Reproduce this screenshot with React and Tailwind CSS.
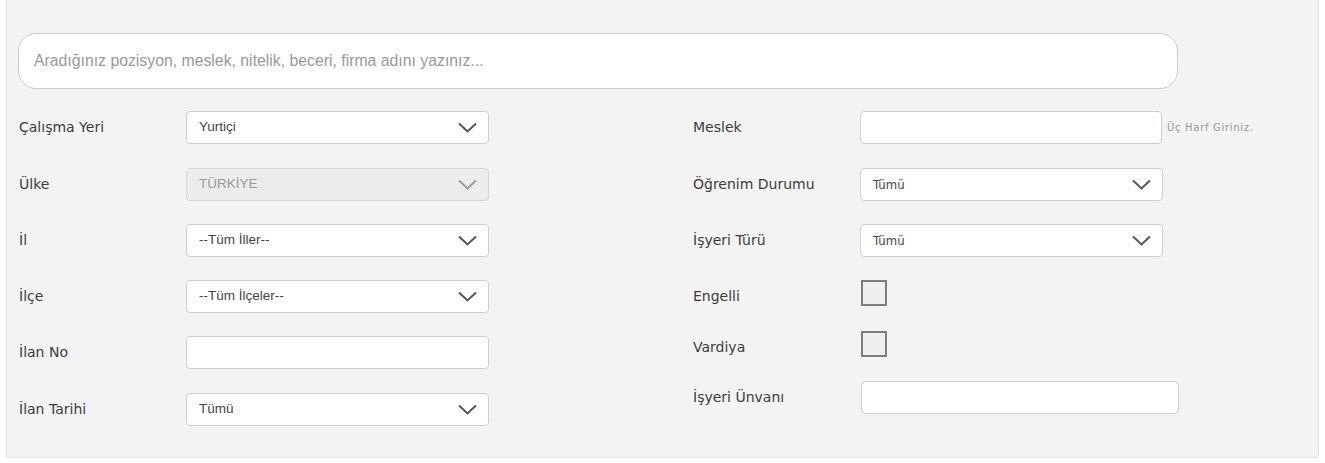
import { useState } from 'react'

const labelFont = { fontFamily: '"DejaVu Sans", Verdana, sans-serif' }

function Chevron({ muted }) {
  return (
    <svg className="w-[19px] h-[11px] shrink-0" viewBox="0 0 19 11" fill="none">
      <path d="M1 1.5l8.5 8 8.5-8" stroke={muted ? '#9a9a9a' : '#555'} strokeWidth="2" />
    </svg>
  )
}

function Select({ value, disabled, narrow }) {
  return (
    <div
      className={`flex items-center justify-between h-[33px] w-[303px] rounded-[4px] border pl-3 pr-[11px] ${
        disabled ? 'bg-[#ececec] border-[#d6d6d6] text-[#999]' : 'bg-white border-[#cfcfcf] text-[#444]'
      }`}
    >
      <span
        className={narrow ? 'text-[13px]' : 'text-[13.5px]'}
        style={narrow ? { fontFamily: '"DejaVu Sans Condensed", "DejaVu Sans", sans-serif' } : { fontFamily: '"Liberation Sans", Arial, sans-serif' }}
      >
        {value}
      </span>
      <Chevron muted={disabled} />
    </div>
  )
}

function TextBox({ w = 'w-[303px]' }) {
  return <input className={`h-[33px] ${w} rounded-[4px] border border-[#cfcfcf] bg-white outline-none`} />
}

function Check() {
  const [on, setOn] = useState(false)
  return (
    <button
      onClick={() => setOn(!on)}
      className="w-[26px] h-[26px] border-2 border-[#7d7d7d] bg-[#efefef]"
    />
  )
}

function Row({ label, children, h = 'h-[56px]', align = 'items-start' }) {
  return (
    <div className={`flex ${align} ${h}`}>
      <div className="w-[167px] h-[33px] flex items-center text-[14px] text-[#3c3c3c]" style={labelFont}>
        {label}
      </div>
      {children}
    </div>
  )
}

export default function App() {
  return (
    <div className="w-[1325px] h-[463px] bg-white overflow-hidden">
      <div className="mx-[6px] h-[458px] bg-[#f3f3f3] border border-t-0 border-[#e2e2e2] rounded-b-[4px] pt-[33px] pl-[11px]">
        {/* Search */}
        <div className="w-[1160px] h-[56px] rounded-[18px] border border-[#cdcdcd] bg-white flex items-center pl-[15px]">
          <span className="text-[15.8px] text-[#999]" style={{ fontFamily: '"Liberation Sans", Arial, sans-serif' }}>
            Aradığınız pozisyon, meslek, nitelik, beceri, firma adını yazınız...
          </span>
        </div>

        <div className="grid grid-cols-[674px_1fr] mt-[22px] pl-[1px]">
          {/* Left column */}
          <div className="flex flex-col">
            <Row label="Çalışma Yeri" h="h-[57px]"><Select value="Yurtiçi" /></Row>
            <Row label="Ülke"><Select value="TÜRKİYE" disabled /></Row>
            <Row label="İl"><Select value="--Tüm İller--" /></Row>
            <Row label="İlçe"><Select value="--Tüm İlçeler--" /></Row>
            <Row label="İlan No" h="h-[57px]"><TextBox /></Row>
            <Row label="İlan Tarihi"><Select value="Tümü" /></Row>
          </div>

          {/* Right column */}
          <div className="flex flex-col">
            <Row label="Meslek" h="h-[57px]">
              <TextBox w="w-[302px]" />
              <span
                className="ml-[5px] h-[33px] flex items-center text-[10px] tracking-[0.7px] text-[#999]"
                style={labelFont}
              >
                Üç Harf Giriniz.
              </span>
            </Row>
            <Row label="Öğrenim Durumu"><Select value="Tümü" narrow /></Row>
            <Row label="İşyeri Türü"><Select value="Tümü" narrow /></Row>
            <div className="flex items-center h-[26px] mb-[25px]">
              <div className="w-[168px] text-[14px] text-[#3c3c3c] pt-[6px]" style={labelFont}>Engelli</div>
              <Check />
            </div>
            <div className="flex items-center h-[26px] mb-[24px]">
              <div className="w-[168px] text-[14px] text-[#3c3c3c] pt-[6px]" style={labelFont}>Vardiya</div>
              <Check />
            </div>
            <div className="flex items-center h-[33px]">
              <div className="w-[168px] text-[14px] text-[#3c3c3c]" style={labelFont}>İşyeri Ünvanı</div>
              <TextBox w="w-[318px]" />
            </div>
          </div>
        </div>
      </div>
    </div>
  )
}
